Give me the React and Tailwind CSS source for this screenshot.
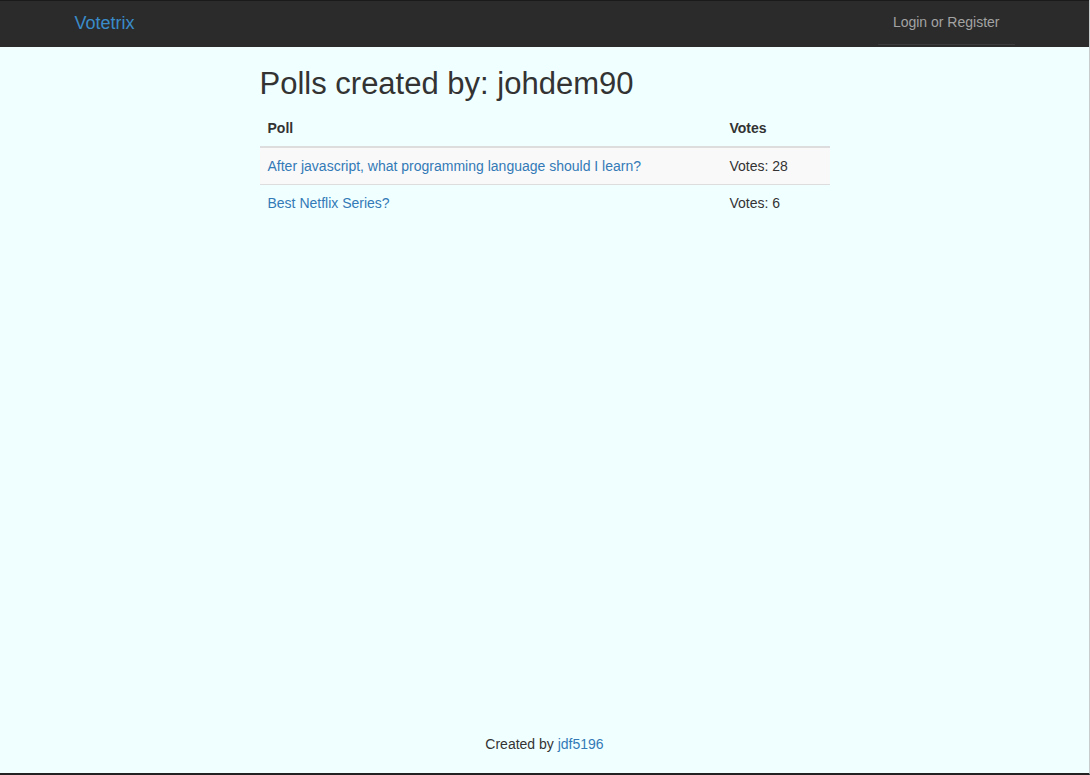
import React from 'react';

const polls = [
  { title: 'After javascript, what programming language should I learn?', votes: 28 },
  { title: 'Best Netflix Series?', votes: 6 },
];

const App = () => {
  return (
    <div
      className="h-[775px] flex flex-col bg-[#f0ffff] text-[#333] text-[14px] border-r border-r-[#c8cccc] border-b-2 border-b-[#222]"
      style={{ fontFamily: '"Liberation Sans", Arial, sans-serif' }}
    >
      <nav className="h-[47px] bg-[#2b2b2b] border-t border-t-[#1a1a1a] shrink-0">
        <div className="w-[940px] mx-auto flex items-center justify-between h-full pb-[2px]">
          <a className="text-[18px] text-[#3a8bc9] leading-[20px]">Votetrix</a>
          <a className="px-[15px] h-full flex items-center text-[#a3a3a3] border-b border-b-[#3c3c3c]">
            Login or Register
          </a>
        </div>
      </nav>

      <main className="w-[570px] mx-auto flex-1">
        <h1 className="text-[31px] leading-[33px] font-normal text-[#333] mt-[20px] mb-[10px]">
          Polls created by: johdem90
        </h1>
        <table className="w-full border-collapse">
          <thead>
            <tr className="border-b-2 border-b-[#dddddd]">
              <th className="text-left font-bold px-2 py-2 leading-[20px]">Poll</th>
              <th className="text-left font-bold px-2 py-2 leading-[20px] w-[108px]">Votes</th>
            </tr>
          </thead>
          <tbody>
            {polls.map((p, i) => (
              <tr key={p.title} className={`border-t border-t-[#dddddd] ${i % 2 === 0 ? 'bg-[#f9f9f9]' : ''}`}>
                <td className="px-2 py-2 leading-[20px]">
                  <a className="text-[#337ab7]">{p.title}</a>
                </td>
                <td className="px-2 py-2 leading-[20px]">Votes: {p.votes}</td>
              </tr>
            ))}
          </tbody>
        </table>
      </main>

      <footer className="text-center pb-[19px] leading-[20px]">
        Created by <a className="text-[#337ab7]">jdf5196</a>
      </footer>
    </div>
  );
};

export default App;
